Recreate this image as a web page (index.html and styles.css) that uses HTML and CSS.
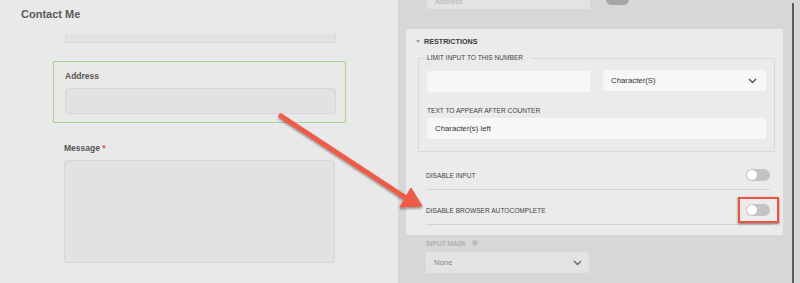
FILE: index.html
```html
<!DOCTYPE html>
<html>
<head>
  <title>Contact Me</title>
  <link rel="stylesheet" href="styles.css">
</head>
<body>
  <div class="preview">
    <div class="preview-title">Contact Me</div>
    <div class="form">
      <div class="input cut"></div>
      <div class="field active">
        <label>Address</label>
        <div class="input"></div>
      </div>
      <div class="field">
        <label>Message <span class="req">*</span></label>
        <div class="textarea"></div>
      </div>
    </div>
  </div>

  <div class="settings">
    <div class="settings-body">
      <div class="top-row">
        <div class="top-input">Address</div>
        <div class="top-toggle"></div>
      </div>

      <div class="panel">
        <div class="panel-head">
          <span class="caret"></span>
          <span>RESTRICTIONS</span>
        </div>

        <fieldset class="group">
          <legend>LIMIT INPUT TO THIS NUMBER</legend>
          <div class="pair">
            <div class="box"></div>
            <div class="box select">
              <span>Character(S)</span>
              <svg width="9" height="6" viewBox="0 0 9 6"><path d="M1 1 L4.5 4.5 L8 1" fill="none" stroke="#555" stroke-width="1.4"/></svg>
            </div>
          </div>
          <div class="sub-label">TEXT TO APPEAR AFTER COUNTER</div>
          <div class="box">Character(s) left</div>
        </fieldset>

        <div class="switch-row">
          <span>DISABLE INPUT</span>
          <span class="toggle"></span>
        </div>
        <div class="switch-row">
          <span>DISABLE BROWSER AUTOCOMPLETE</span>
          <span class="toggle"></span>
        </div>
      </div>

      <div class="mask">
        <div class="mask-label">
          INPUT MASK
          <svg width="6" height="7" viewBox="0 0 6 7"><path d="M0.5 0.5 H5.5 V4 L3 6.5 L0.5 4 Z" fill="#bcbcbc"/></svg>
        </div>
        <div class="mask-select">
          <span>None</span>
          <svg width="9" height="6" viewBox="0 0 9 6"><path d="M1 1 L4.5 4.5 L8 1" fill="none" stroke="#666" stroke-width="1.4"/></svg>
        </div>
      </div>
    </div>
    <div class="scrollbar"></div>
  </div>

  <!-- callout overlay -->
  <div class="highlight"></div>
  <svg class="arrow" width="800" height="283" viewBox="0 0 800 283">
    <defs>
      <filter id="shadow" x="-10%" y="-10%" width="120%" height="130%">
        <feDropShadow dx="0" dy="1.5" stdDeviation="1" flood-color="#000" flood-opacity="0.45"/>
      </filter>
    </defs>
    <g filter="url(#shadow)" fill="#f05a49" stroke="#f05a49">
      <line x1="281" y1="116" x2="406" y2="198" stroke-width="5" stroke-linecap="round"/>
      <path d="M422 206 L400 207 L411 188 Z" stroke-width="1" stroke-linejoin="round"/>
    </g>
  </svg>
</body>
</html>
```

FILE: styles.css
```css
body {
  margin: 0;
  width: 800px;
  height: 283px;
  overflow: hidden;
  display: flex;
  font-family: "Liberation Sans", Arial, sans-serif;
  position: relative;
}

/* left: form preview */
.preview {
  width: 398px;
  background-color: #e9e9e9;
}

.preview-title {
  padding: 7px 21px 0;
  height: 19px;
  font-size: 11px;
  line-height: 15px;
  font-weight: bold;
  color: #5a5a5a;
}

.form {
  margin-left: 53px;
  width: 293px;
}

.input {
  height: 24px;
  background-color: #e2e2e2;
  border: 1px solid #d7d7d7;
  border-radius: 3px;
}

.input.cut {
  height: 8px;
  margin: 7px 10px 0 12px;
  border-top-color: #e5e5e5;
}

.field {
  margin-top: 19px;
  padding: 0 11px 0 11px;
}

.field.active {
  margin-top: 18px;
  padding: 8px 9px 8px 11px;
  border: 1px solid #a9d290;
  border-radius: 2px;
}

.field label {
  display: block;
  font-size: 8.5px;
  font-weight: bold;
  color: #555;
  line-height: 12px;
  margin-bottom: 6px;
}

.req {
  color: #e2443c;
}

.textarea {
  height: 101px;
  background-color: #e2e2e2;
  border: 1px solid #d7d7d7;
  border-radius: 3px;
}

/* right: settings sidebar */
.settings {
  flex: 1;
  display: flex;
  background-color: #d6d7d8;
}

.settings-body {
  width: 394px;
}

.scrollbar {
  width: 2px;
  margin-top: 3px;
  background-color: #5d5d5d;
}

.top-row {
  height: 29px;
  display: flex;
  align-items: flex-start;
  padding-left: 29px;
}

.top-input {
  width: 163px;
  height: 9px;
  background-color: #e3e3e3;
  border-radius: 0 0 2px 2px;
  color: #b5b5b5;
  font-size: 7.5px;
  line-height: 3px;
  padding-left: 8px;
  box-sizing: border-box;
}

.top-toggle {
  width: 23px;
  height: 11px;
  margin: -6px 0 0 16px;
  border-radius: 6px;
  background-color: #a6a6a6;
}

.panel {
  margin-left: 8px;
  width: 377px;
  padding-bottom: 10px;
  background-color: #ebebec;
}

.panel-head {
  display: flex;
  align-items: center;
  height: 24px;
  padding: 0 0 0 10px;
  font-size: 7.2px;
  font-weight: bold;
  color: #3a3a3a;
}

.caret {
  width: 0;
  height: 0;
  border-left: 2.5px solid transparent;
  border-right: 2.5px solid transparent;
  border-top: 3px solid #a0a0a0;
  margin-right: 4px;
}

.group {
  margin: 0 8px 0 12px;
  padding: 8px 8px 12px;
  border: 1px solid #d9d9d9;
  min-width: 0;
}

.group legend {
  padding: 0 8px 0 0;
  font-size: 6.6px;
  line-height: 10px;
  color: #444;
}

.pair {
  display: flex;
  justify-content: space-between;
}

.pair .box {
  width: 163px;
}

.box {
  height: 21px;
  background-color: #f7f7f7;
  border-radius: 2px;
  box-sizing: border-box;
  padding: 0 8px;
  display: flex;
  align-items: center;
  font-size: 7.8px;
  color: #333;
}

.box.select {
  justify-content: space-between;
  padding-right: 9px;
  margin-top: -1px;
}

.sub-label {
  font-size: 6.6px;
  color: #444;
  margin: 14px 0 3px;
  line-height: 9px;
}

.switch-row {
  display: flex;
  justify-content: space-between;
  align-items: center;
  margin: 0 13px 0 20px;
  padding: 14px 0 8px;
  border-bottom: 1px solid #d3d3d3;
  font-size: 6.6px;
  color: #444;
}

.group + .switch-row {
  margin-top: 3px;
}

.toggle {
  position: relative;
  width: 24px;
  height: 12px;
  border-radius: 6px;
  background-color: #c3c3c3;
}

.toggle::after {
  content: "";
  position: absolute;
  left: 1px;
  top: 1px;
  width: 10px;
  height: 10px;
  border-radius: 50%;
  background-color: #fff;
}

.mask {
  padding-left: 28px;
}

.mask-label {
  display: flex;
  align-items: center;
  gap: 6px;
  height: 16px;
  font-size: 6.6px;
  color: #a0a0a0;
}

.mask-select {
  width: 163px;
  height: 21px;
  margin-top: 1px;
  box-sizing: border-box;
  display: flex;
  justify-content: space-between;
  align-items: center;
  padding: 0 7px 0 8px;
  background-color: #e3e3e3;
  border-radius: 2px;
  font-size: 7.8px;
  color: #8a8a8a;
}

/* callout */
.highlight {
  position: absolute;
  left: 738px;
  top: 197px;
  width: 37px;
  height: 22px;
  border: 2px solid #ef5340;
  box-shadow: 0 1px 2px rgba(0, 0, 0, 0.5);
}

.arrow {
  position: absolute;
  left: 0;
  top: 0;
  pointer-events: none;
}
```
